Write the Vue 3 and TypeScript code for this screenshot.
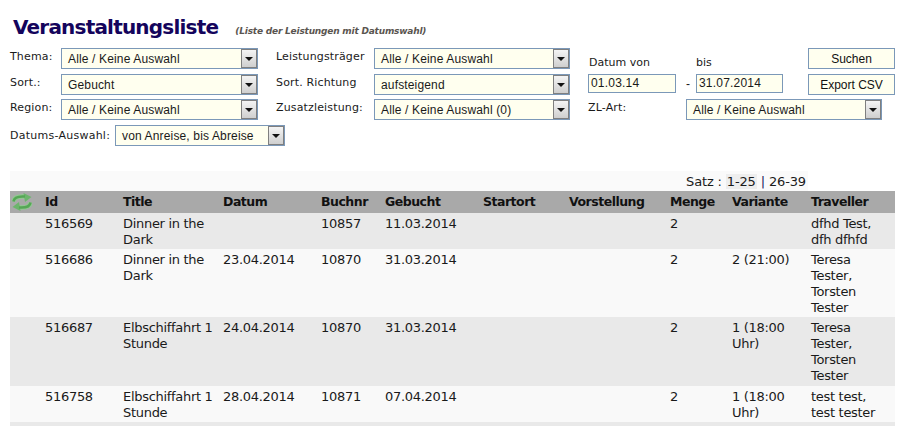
<script setup lang="ts">
interface Row { id: string; title: string; datum: string; buchnr: string; gebucht: string; menge: string; variante: string; traveller: string }
const columns = ['Id', 'Title', 'Datum', 'Buchnr', 'Gebucht', 'Startort', 'Vorstellung', 'Menge', 'Variante', 'Traveller']
const widths = [35, 78, 100, 98, 64, 98, 86, 101, 62, 79, 84]
const rows: Row[] = [
  { id: '516569', title: 'Dinner in the Dark', datum: '', buchnr: '10857', gebucht: '11.03.2014', menge: '2', variante: '', traveller: 'dfhd Test, dfh dfhfd' },
  { id: '516686', title: 'Dinner in the Dark', datum: '23.04.2014', buchnr: '10870', gebucht: '31.03.2014', menge: '2', variante: '2 (21:00)', traveller: 'Teresa Tester, Torsten Tester' },
  { id: '516687', title: 'Elbschiffahrt 1 Stunde', datum: '24.04.2014', buchnr: '10870', gebucht: '31.03.2014', menge: '2', variante: '1 (18:00 Uhr)', traveller: 'Teresa Tester, Torsten Tester' },
  { id: '516758', title: 'Elbschiffahrt 1 Stunde', datum: '28.04.2014', buchnr: '10871', gebucht: '07.04.2014', menge: '2', variante: '1 (18:00 Uhr)', traveller: 'test test, test tester' }
]
</script>

<template>
  <div class="page">
    <h1 class="title">Veranstaltungsliste <small>(Liste der Leistungen mit Datumswahl)</small></h1>
    <div class="form">
      <div class="col col1">
        <div class="line"><label>Thema:</label><div class="sel w197"><span>Alle / Keine Auswahl</span><i></i></div></div>
        <div class="line"><label>Sort.:</label><div class="sel w197"><span>Gebucht</span><i></i></div></div>
        <div class="line"><label>Region:</label><div class="sel w197"><span>Alle / Keine Auswahl</span><i></i></div></div>
        <div class="line"><label class="auto">Datums-Auswahl:</label><div class="sel w170"><span>von Anreise, bis Abreise</span><i></i></div></div>
      </div>
      <div class="col col2">
        <div class="line"><label class="l98">Leistungsträger</label><div class="sel w196"><span>Alle / Keine Auswahl</span><i></i></div></div>
        <div class="line"><label class="l98">Sort. Richtung</label><div class="sel w196"><span>aufsteigend</span><i></i></div></div>
        <div class="line"><label class="l98">Zusatzleistung:</label><div class="sel w196"><span>Alle / Keine Auswahl (0)</span><i></i></div></div>
      </div>
      <div class="col col3">
        <div class="top">
          <div class="dates">
            <div class="date-heads"><span class="dh1">Datum von</span><span>bis</span></div>
            <div class="date-inputs"><div class="inp i88">01.03.14</div><span class="dash">-</span><div class="inp i87">31.07.2014</div></div>
          </div>
          <div class="btns">
            <button class="btn" type="button">Suchen</button>
            <button class="btn" type="button">Export CSV</button>
          </div>
        </div>
        <div class="line"><label class="l98">ZL-Art:</label><div class="sel w196"><span>Alle / Keine Auswahl</span><i></i></div></div>
      </div>
    </div>
    <div class="pager"><span>Satz :</span><b class="cur">1-25</b><span class="sep">|</span><span>26-39</span></div>
    <table class="list">
      <colgroup><col v-for="(w, i) in widths" :key="i" :style="{ width: w + 'px' }"></colgroup>
      <thead>
        <tr>
          <th class="ic">
            <svg width="20" height="18" viewBox="0 0 20 18">
              <path d="M1.500 8.500 C2 4 6 3 13 3.500" fill="none" stroke="#8fca8f" stroke-width="4.500"/>
              <path d="M11.500 0 L19.500 4 L13 9 Z" fill="#6cb56c"/>
              <path d="M18.500 9.500 C18 14 14 15 7 14.500" fill="none" stroke="#8fca8f" stroke-width="4.500"/>
              <path d="M8.500 18 L0.500 14 L7 9 Z" fill="#6cb56c"/>
              <path d="M1.500 8.500 C2 4 6 3 13 3.500" fill="none" stroke="#55a655" stroke-width="2.500"/>
              <path d="M18.500 9.500 C18 14 14 15 7 14.500" fill="none" stroke="#55a655" stroke-width="2.500"/>
            </svg>
          </th>
          <th v-for="c in columns" :key="c">{{ c }}</th>
        </tr>
      </thead>
      <tbody>
        <tr v-for="r in rows" :key="r.id">
          <td></td>
          <td>{{ r.id }}</td>
          <td>{{ r.title }}</td>
          <td>{{ r.datum }}</td>
          <td>{{ r.buchnr }}</td>
          <td>{{ r.gebucht }}</td>
          <td></td>
          <td></td>
          <td>{{ r.menge }}</td>
          <td>{{ r.variante }}</td>
          <td>{{ r.traveller }}</td>
        </tr>
        <tr class="last"><td colspan="11"></td></tr>
      </tbody>
    </table>
  </div>
</template>

<style>
html, body { margin: 0; background: #fff; overflow: hidden; }
</style>

<style scoped>
.page { width: 901px; height: 426px; overflow: hidden; font-family: "DejaVu Sans", Verdana, sans-serif; color: #1a1a1a; box-sizing: border-box; padding: 14px 6px 0 10px; }
.title { margin: 0 0 0 3px; height: 34px; font-size: 20px; line-height: 26px; letter-spacing: -0.8px; font-weight: bold; color: #14045c; white-space: nowrap; }
.title small { font-size: 9px; letter-spacing: -0.2px; font-style: italic; color: #5a5550; margin-left: 11px; }
.form { display: flex; height: 123px; }
.col1 { width: 266px; }
.col2 { width: 312px; }
.col3 { width: 307px; }
.top { display: flex; height: 51px; }
.dates { width: 220px; }
.btns { display: flex; flex-direction: column; gap: 5px; }
.line { display: flex; height: 26px; font-size: 11px; letter-spacing: 0.15px; }
.line:nth-child(2) { height: 25px; }
.line label { width: 51px; line-height: 16px; padding-top: 1px; flex: none; }
.line label.auto { width: 105px; padding-top: 3px; line-height: 16px; letter-spacing: 0.25px; }
.line label.l98 { width: 98px; }
.sel { display: flex; justify-content: space-between; flex: none; box-sizing: border-box; height: 21px; border: 1px solid #7b98b8; background: #ffffef; font: 12px/20px "Liberation Sans", Arial, sans-serif; letter-spacing: 0.15px; padding-left: 6px; }
.sel i { width: 16px; height: 19px; background: linear-gradient(#f4f4f4, #cfcfcf); border: 1px solid #7f7f7f; box-sizing: border-box; position: relative; flex: none; }
.sel i::after { content: ""; position: absolute; left: 3px; top: 7px; border: 4px solid transparent; border-top-color: #111; border-bottom: 0; }
.w197 { width: 197px; }
.w196 { width: 196px; }
.w170 { width: 170px; }
.date-heads { display: flex; font-size: 11px; line-height: 14px; padding: 8px 0 0 1px; height: 12px; margin-bottom: 6px; }
.dh1 { width: 107px; }
.date-inputs { display: flex; align-items: center; }
.inp { box-sizing: border-box; height: 19px; border: 1px solid #7b98b8; background: #ffffef; font: 12px/17px "Liberation Sans", Arial, sans-serif; letter-spacing: 0.2px; padding-left: 2px; }
.i88 { width: 88px; }
.i87 { width: 87px; }
.dash { width: 24px; padding-right: 0; text-align: center; font: 12px "Liberation Sans", Arial, sans-serif; margin-right: -4px; }
.btn { box-sizing: border-box; width: 87px; height: 21px; padding: 0; border: 1px solid #7b98b8; background: #ffffef; color: #111; font: 12px "Liberation Sans", Arial, sans-serif; }
.pager { box-sizing: border-box; height: 20px; width: 798px; background: #fafafa; display: flex; justify-content: flex-end; align-items: center; gap: 4px; font-size: 13px; letter-spacing: -0.15px; padding-right: 2px; }
.pager .cur { font-weight: normal; background: #eee; padding: 0 1px; }
.pager .sep { color: #1a0f5c; }
.list { table-layout: fixed; width: 885px; border-collapse: collapse; font-size: 13px; line-height: 16px; letter-spacing: -0.3px; }
.list th { background: #a9a9a9; height: 22px; padding: 0; text-align: left; font-size: 12.5px; letter-spacing: -0.5px; font-weight: bold; vertical-align: middle; color: #111; }
.list th.ic { padding-left: 2px; line-height: 0; }
.list td { padding: 3px 4px 1px 0; vertical-align: top; }
.list tbody tr:nth-child(3) td { padding-bottom: 2px; }
.list tbody tr:nth-child(odd) { background: #e9e9e9; }
.list tbody tr:nth-child(even) { background: #f9f9f9; }
.list tr.last td { height: 10px; }
</style>
